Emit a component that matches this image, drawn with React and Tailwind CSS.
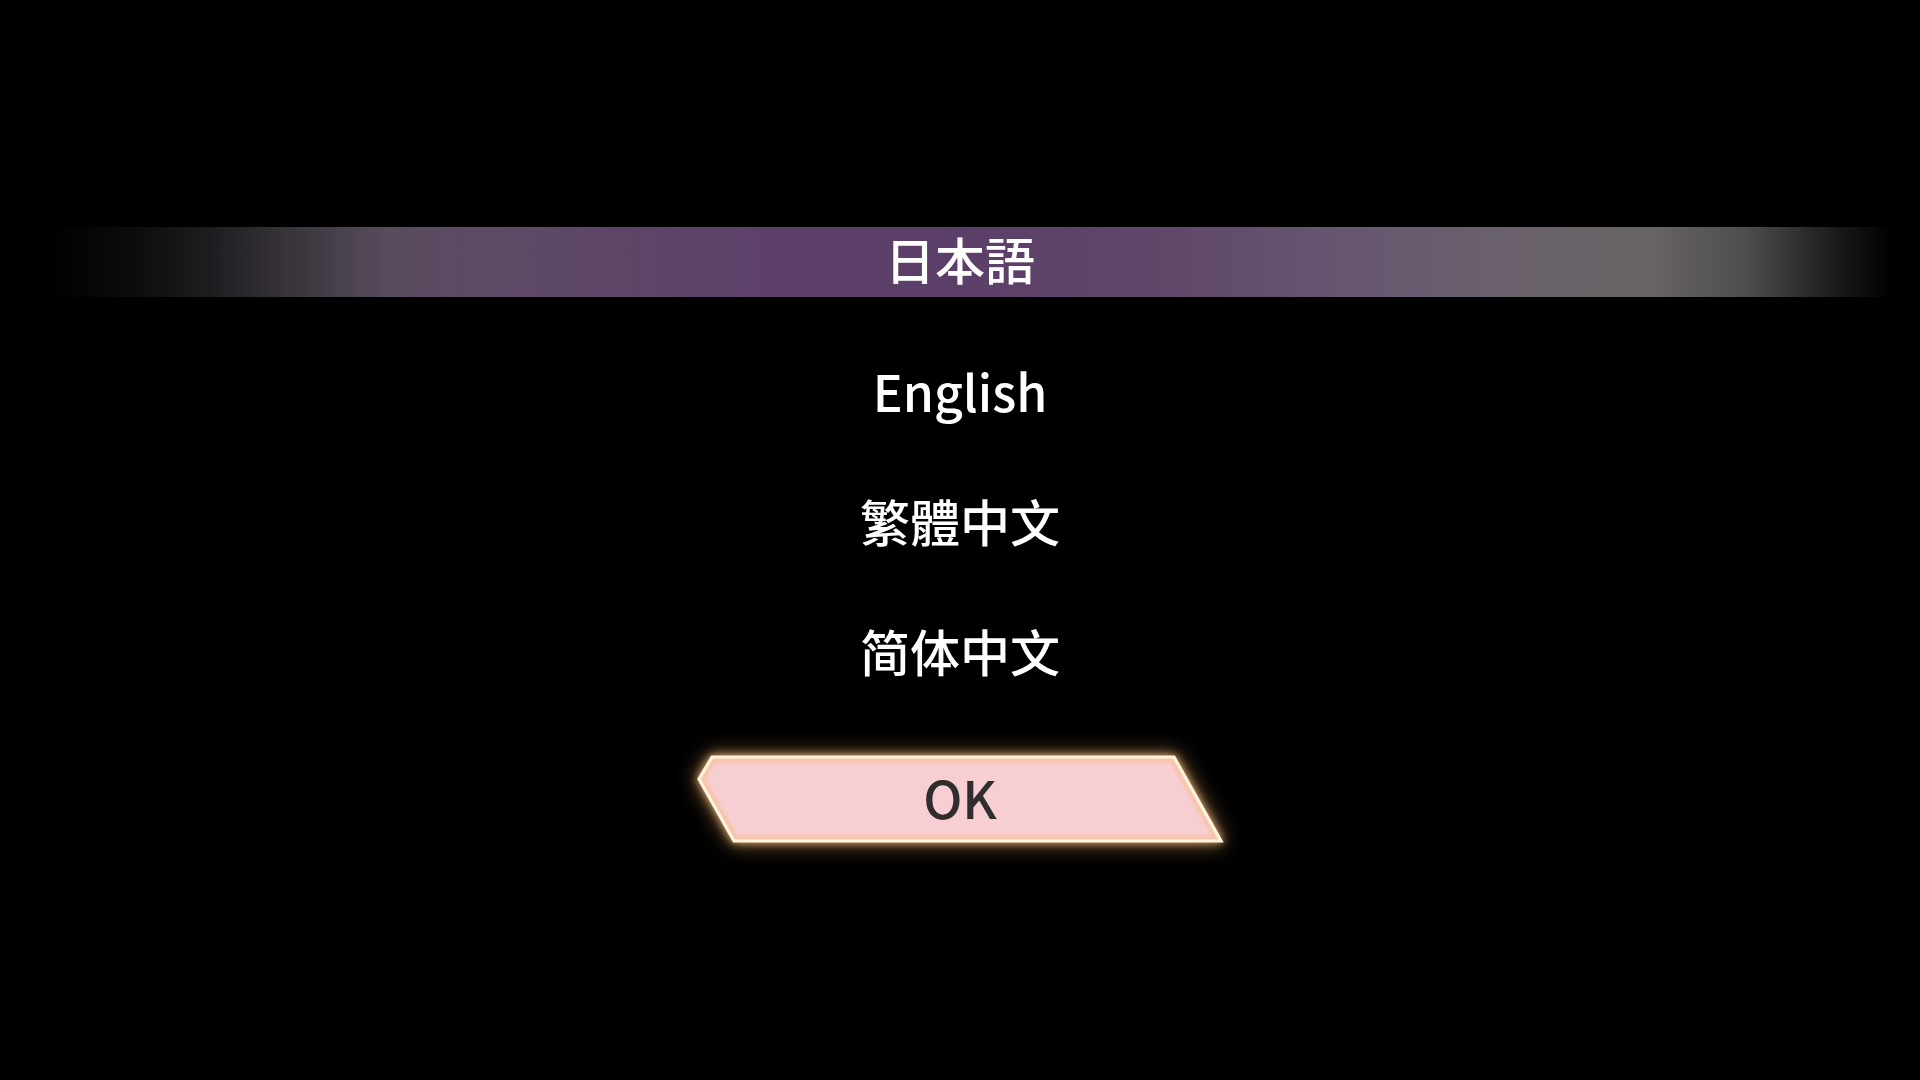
import React from "react";

const cjk = {
  fontFamily: '"Noto Sans CJK JP", "Noto Sans CJK SC", sans-serif',
};

function OkButton() {
  const pts = "17,4 479,4 526,88 39,88 4,26";
  return (
    <div className="grid w-[530px] h-[92px] [filter:drop-shadow(0_0_4px_rgba(240,190,130,0.9))_drop-shadow(0_0_10px_rgba(170,120,70,0.8))]">
      <svg
        className="col-start-1 row-start-1 w-[530px] h-[92px]"
        viewBox="0 0 530 92"
      >
        <defs>
          <clipPath id="okclip">
            <polygon points={pts} />
          </clipPath>
          <filter id="soft" x="-5%" y="-20%" width="110%" height="140%">
            <feGaussianBlur stdDeviation="1.2" />
          </filter>
        </defs>
        <polygon points={pts} fill="#f7ced1" />
        <g clipPath="url(#okclip)">
          <polygon
            points={pts}
            fill="none"
            stroke="#f7c6ae"
            strokeWidth="12"
            filter="url(#soft)"
          />
        </g>
        <polygon
          points={pts}
          fill="none"
          stroke="#fff3de"
          strokeWidth="3.2"
          strokeLinejoin="miter"
        />
      </svg>
      <div
        className="col-start-1 row-start-1 flex items-center justify-center text-[52px] font-medium leading-none text-[#2f2d2d] pb-[4px]"
        style={cjk}
      >
        OK
      </div>
    </div>
  );
}

export default function App() {
  return (
    <div className="w-[1920px] h-[1080px] bg-black overflow-hidden flex flex-col items-center pt-[197px]">
      <div className="w-full h-[130px] flex items-center">
        <div className="w-full h-[70px] flex items-center justify-center bg-[linear-gradient(90deg,#000_2.5%,#0c0c0e_7%,#1e1d20_11%,#38343a_15%,#574b5c_20%,#5d4964_25%,#5c406a_40%,#5c3f69_50%,#5f4669_60%,#665670_70%,#6b626b_80%,#686466_86%,#4e4c4e_91%,#1c1c1c_95.5%,#000_98.5%)]">
          <span
            className="text-white text-[50px] font-medium leading-none pb-[8px]"
            style={cjk}
          >
            日本語
          </span>
        </div>
      </div>
      <div
        className="h-[130px] flex items-center justify-center text-white text-[50px] font-medium leading-none pb-[5px]"
        style={cjk}
      >
        English
      </div>
      <div
        className="h-[130px] flex items-center justify-center text-white text-[50px] font-medium leading-none pb-[5px]"
        style={{
          fontFamily: '"Noto Sans CJK TC", "Noto Sans CJK JP", sans-serif',
        }}
      >
        繁體中文
      </div>
      <div
        className="h-[130px] flex items-center justify-center text-white text-[50px] font-medium leading-none pb-[5px]"
        style={{
          fontFamily: '"Noto Sans CJK SC", "Noto Sans CJK JP", sans-serif',
        }}
      >
        简体中文
      </div>
      <div className="mt-[36px] flex justify-center">
        <OkButton />
      </div>
    </div>
  );
}
